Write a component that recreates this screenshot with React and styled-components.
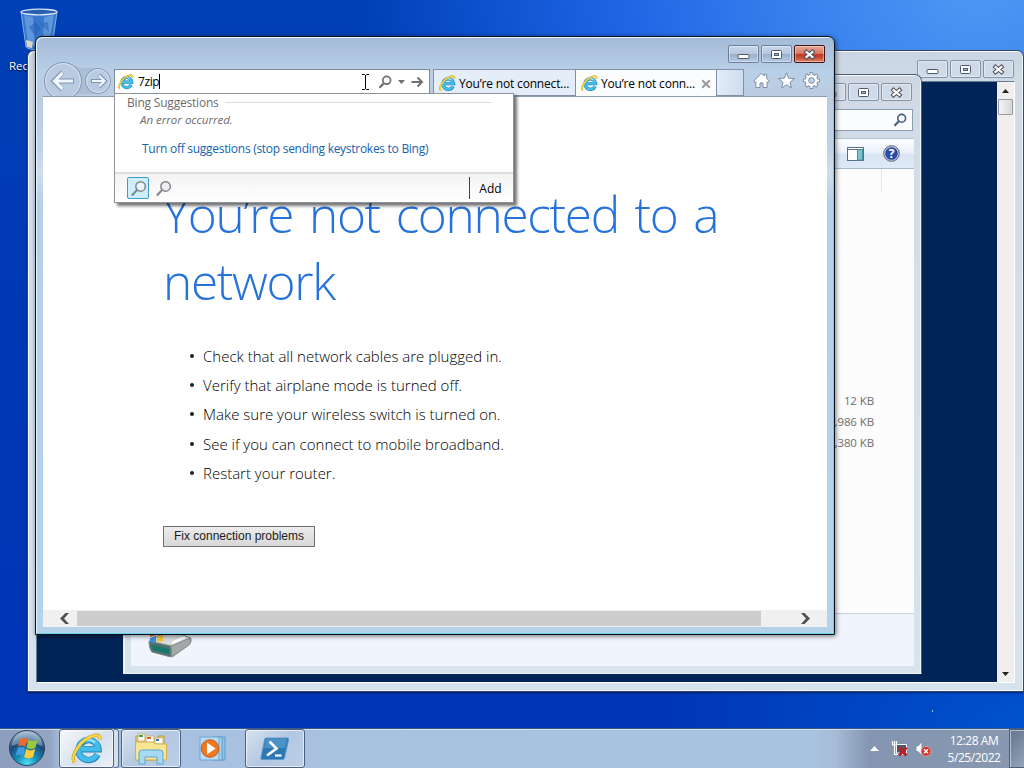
import React from 'react';
import styled, { createGlobalStyle, css } from 'styled-components';

const GlobalStyle = createGlobalStyle`
  * {
    box-sizing: border-box;
  }
  body {
    margin: 0;
    overflow: hidden;
    font-family: 'Open Sans', 'Noto Sans', sans-serif;
    font-size: 12px;
    color: #000;
  }
  svg {
    display: block;
    flex-shrink: 0;
  }
`;

const Screen = styled.div`
  position: relative;
  display: flex;
  flex-direction: column;
  width: 1024px;
  height: 768px;
  overflow: hidden;
`;

const Desktop = styled.div`
  position: relative;
  flex: 1;
  overflow: hidden;
  background: radial-gradient(ellipse 620px 560px at 980px -20px, #4c9af4 0%, #3a82ee 28%, #1d63e4 60%, rgba(0, 72, 208, 0) 100%),
    radial-gradient(ellipse 360px 200px at 1024px 728px, #0052cf 0%, rgba(0, 70, 196, 0) 100%),
    linear-gradient(180deg, #0040b6 0%, #0037b4 50%, #0036b6 100%);
`;

const RecycleBin = styled.div`
  position: absolute;
  top: 7px;
  left: 2px;
  width: 74px;
  display: flex;
  flex-direction: column;
  align-items: center;
  gap: 5px;
  font-size: 11.5px;
  color: #fff;
  white-space: nowrap;
  text-shadow: 0 1px 2px #000;
`;

const Speck = styled.div`
  position: absolute;
  top: 710px;
  left: 932px;
  width: 1px;
  height: 2px;
  background: #9cc0f5;
`;

/* ---------- window chrome ---------- */

const Window = styled.div`
  position: absolute;
  display: flex;
  flex-direction: column;
`;

const ShellWindow = styled(Window)`
  top: 50px;
  left: 27px;
  width: 997px;
  height: 642px;
  padding: 0 8px 8px;
  border: 1px solid #35485f;
  border-radius: 7px 7px 0 0;
  background: linear-gradient(180deg, #c9d5e4 0px, #d0dbe7 40px, #d6e2ed 100%);
  box-shadow: inset 1px 1px 0 #f4f9fd, inset -1px -1px 0 #f0f6fa, 0 1px 2px rgba(0, 0, 30, 0.5);
`;

const ExplorerWindow = styled(Window)`
  top: 74px;
  left: 123px;
  width: 799px;
  height: 600px;
  padding: 0 7px 7px;
  border: 1px solid #4a5c72;
  border-left-color: #e8eff5;
  border-bottom-color: #eef4f8;
  border-radius: 7px 7px 0 0;
  background: linear-gradient(180deg, #cfd7e3 0px, #d2dce7 60px, #d7e4ed 100%);
  box-shadow: inset 1px 1px 0 #f4f8fb, inset -1px 0 0 #e9f1f6;
`;

const BrowserWindow = styled(Window)`
  top: 36px;
  left: 35px;
  width: 800px;
  height: 599px;
  padding: 0 7px 7px;
  border: 1px solid #07111c;
  border-radius: 7px 7px 0 0;
  background: linear-gradient(180deg, #a3bad6 0px, #acc2de 14px, #b9d0e8 34px, #bccce1 60px, #bfd2ea 110px, #cfdeee 135px, #b4d0ea 165px, #b3d3ec 100%);
  box-shadow: inset 1px 1px 0 #e6f5ff, inset -1px -1px 0 #6fd0ea, 1px 1px 5px rgba(0, 0, 0, 0.55);
`;

const TitleBar = styled.div`
  display: flex;
  justify-content: flex-end;
  align-items: flex-start;
  gap: 2px;
  flex-shrink: 0;
  height: ${(props) => props.$height}px;
  padding-top: ${(props) => props.$top}px;
  padding-right: ${(props) => props.$right || 1}px;
`;

const activeButton = css`
  border-color: #6b7f9b;
  background: linear-gradient(180deg, #c8d7ea 0%, #b7c9e0 48%, #9cb0cb 52%, #b5cae2 100%);
`;

const closeButton = css`
  border-color: #3f1310;
  background: linear-gradient(180deg, #e8a596 0%, #d97c69 46%, #bf3a22 52%, #c84f35 75%, #dd8b70 100%);
`;

const CaptionButton = styled.div`
  display: flex;
  align-items: center;
  justify-content: center;
  width: 31px;
  height: 18px;
  border: 1px solid #8393a8;
  border-radius: 2px;
  background: rgba(210, 221, 234, 0.5);
  box-shadow: inset 0 0 0 1px rgba(255, 255, 255, 0.4);
  ${(props) => props.$active && activeButton}
  ${(props) => props.$close && closeButton}
`;

/* ---------- console window ---------- */

const ShellBody = styled.div`
  display: flex;
  flex: 1;
  border: 1px solid #6c7c91;
  border-right-color: #fff;
  border-bottom: 1px solid #fff;
`;

const ShellText = styled.div`
  flex: 1;
  background: #012456;
`;

const VScroll = styled.div`
  display: flex;
  flex-direction: column;
  align-items: center;
  justify-content: space-between;
  width: 17px;
  padding: 7px 0 6px;
  background: #f0efee;
`;

const VScrollTop = styled.div`
  display: flex;
  flex-direction: column;
  align-items: center;
  gap: 6px;
`;

const VThumb = styled.div`
  width: 15px;
  height: 16px;
  border: 1px solid #9a9a9c;
  border-radius: 1px;
  background: linear-gradient(90deg, #f5f5f5, #d6d6da);
`;

/* ---------- explorer window ---------- */

const SearchRow = styled.div`
  display: flex;
  justify-content: flex-end;
  height: 29px;
  padding-right: 1px;
`;

const SearchBox = styled.div`
  display: flex;
  align-items: center;
  justify-content: flex-end;
  width: 200px;
  height: 22px;
  padding-right: 5px;
  border: 1px solid #8f9fb3;
  background: #fafcfe;
`;

const CommandBar = styled.div`
  display: flex;
  align-items: center;
  justify-content: flex-end;
  gap: 19px;
  height: 31px;
  padding-right: 14px;
  border-top: 1px solid #b2c1d2;
  border-bottom: 1px solid #a9bad0;
  background: linear-gradient(180deg, #fbfdff 0%, #eaf1fa 48%, #d9e5f4 52%, #dee9f6 100%);
`;

const FileList = styled.div`
  display: flex;
  flex: 1;
  justify-content: flex-end;
  background: #fcfcfd;
`;

const SizeColumn = styled.div`
  display: flex;
  flex-direction: column;
  align-items: flex-end;
  width: 90px;
  padding: 221px 7px 0 0;
  font-size: 11.5px;
  line-height: 21px;
  letter-spacing: -0.1px;
  color: #6d6d6d;
`;

const ColumnEdge = styled.div`
  width: 33px;
  height: 22px;
  border-left: 1px solid #e2e6ec;
`;

const DetailsPane = styled.div`
  height: 53px;
  padding: 13px 0 0 16px;
  border-top: 1px solid #c6cfdc;
  background: #f0f4fd;
`;

/* ---------- browser window ---------- */

const NavRow = styled.div`
  position: relative;
  display: flex;
  flex-shrink: 0;
  align-items: flex-end;
  height: 27px;
`;

const AddressBar = styled.div`
  display: flex;
  align-items: center;
  width: 316px;
  height: 27px;
  padding: 0 5px 3px 3px;
  border: 1px solid #7a8ba0;
  border-bottom: 0;
  background: #fff;
  font-size: 12px;
`;

const Typed = styled.span`
  margin-left: 4px;
  border-right: 1px solid #000;
  line-height: 15px;
  letter-spacing: -0.4px;
`;

const AddressTools = styled.div`
  display: flex;
  align-items: center;
  gap: 6px;
  margin-left: auto;
`;

const Tabs = styled.div`
  display: flex;
  height: 27px;
  margin-left: 3px;
  border-left: 1px solid #7f90a7;
`;

const Tab = styled.div`
  display: flex;
  align-items: center;
  gap: 3px;
  width: ${(props) => props.$width}px;
  padding: 2px 5px ${(props) => (props.$current ? 1 : 0)}px 5px;
  border: 1px solid #7f90a7;
  border-left: 0;
  border-bottom: ${(props) => (props.$current ? '0' : '1px solid #7f90a7')};
  background: ${(props) => (props.$current ? '#fafcfe' : '#e4edf8')};
  font-size: 12px;
  letter-spacing: -0.18px;
  white-space: nowrap;
`;

const TabClose = styled.span`
  margin-left: auto;
`;

const NewTab = styled.div`
  width: 27px;
  border: 1px solid #7f90a7;
  border-left: 0;
  background: linear-gradient(90deg, #e3edf8, #cddced);
`;

const BrowserTools = styled.div`
  display: flex;
  align-items: center;
  gap: 8px;
  height: 27px;
  margin-left: 9px;
  padding-bottom: 5px;
`;

const Page = styled.div`
  flex: 1;
  padding: 84px 80px 0 120px;
  border-top: 1px solid #8a9bb3;
  background: #fff;
`;

const Heading = styled.h1`
  margin: 0;
  font-size: 49.5px;
  font-weight: 300;
  line-height: 67px;
  letter-spacing: -1.3px;
  word-spacing: 4.2px;
  color: #2672dd;
`;

const Tips = styled.ul`
  margin: 26px 0 0;
  padding: 0 0 0 40px;
  list-style: none;
`;

const Tip = styled.li`
  display: flex;
  align-items: center;
  height: 29.3px;
  font-size: 15px;
  font-weight: 300;
  color: #000;

  &::before {
    content: '';
    width: 4px;
    height: 4px;
    margin: 0 9px 0 -13px;
    border-radius: 50%;
    background: #222;
  }
`;

const FixButton = styled.button`
  display: block;
  width: 152px;
  height: 21px;
  margin: 39px 0 0;
  padding: 0 0 2px;
  border: 1px solid #707070;
  background: linear-gradient(180deg, #ececec, #d8d8d8);
  font-family: 'Liberation Sans', Arial, sans-serif;
  font-size: 12px;
  color: #222;
`;

const HScroll = styled.div`
  display: flex;
  align-items: center;
  flex-shrink: 0;
  height: 17px;
  padding: 0 16px;
  background: #f0f0f0;
`;

const HThumb = styled.div`
  width: 684px;
  height: 15px;
  margin: 0 auto 0 7px;
  background: #cdcdcd;
`;

const Suggestions = styled.div`
  position: absolute;
  z-index: 2;
  top: 24px;
  left: 71px;
  display: flex;
  flex-direction: column;
  width: 400px;
  height: 110px;
  border: 1px solid #8e9299;
  background: #fff;
  box-shadow: 3px 3px 3px rgba(0, 0, 0, 0.55);
`;

const SuggestHeader = styled.div`
  display: flex;
  align-items: center;
  gap: 6px;
  height: 16px;
  padding: 0 21px 0 12px;
  font-size: 12px;
  letter-spacing: -0.2px;
  color: #6d6d6d;

  &::after {
    content: '';
    flex: 1;
    height: 1px;
    background: #dcdcdc;
  }
`;

const SuggestNote = styled.div`
  padding: 2px 0 0 25px;
  font-size: 11.5px;
  font-style: italic;
  line-height: 16px;
  color: #6d6d6d;
`;

const SuggestLink = styled.div`
  padding: 13px 0 0 27px;
  font-size: 12px;
  line-height: 16px;
  letter-spacing: -0.28px;
  color: #1563b0;
`;

const SuggestFooter = styled.div`
  display: flex;
  align-items: center;
  gap: 3px;
  height: 30px;
  margin-top: auto;
  padding: 0 3px 0 12px;
  border-top: 2px solid #dedede;
  background: linear-gradient(180deg, #f3f3f3, #fff);
`;

const Provider = styled.div`
  display: flex;
  align-items: center;
  justify-content: center;
  width: 22px;
  height: 22px;
  border: 1px solid ${(props) => (props.$selected ? '#3f9cc4' : 'transparent')};
  border-radius: 2px;
  background: ${(props) => (props.$selected ? '#cdeefb' : 'none')};
`;

const AddLink = styled.div`
  display: flex;
  align-items: center;
  justify-content: center;
  width: 41px;
  height: 22px;
  margin-left: auto;
  padding-left: 1px;
  border-left: 1px solid #444;
`;

const TextCursor = styled.div`
  position: absolute;
  z-index: 3;
  top: 74px;
  left: 361px;
`;

/* ---------- taskbar ---------- */

const Taskbar = styled.div`
  display: flex;
  align-items: stretch;
  height: 40px;
  border-top: 1px solid #3a5a8a;
  background: linear-gradient(90deg, #8c9dbd 0px, #93a5c3 50px, #a9c1e0 62px, #a9c2e0 815px, #a7bcd6 835px, #8395b0 870px, #8898b0 1024px);
  box-shadow: inset 0 1px 0 rgba(230, 242, 255, 0.65);
`;

const StartButton = styled.div`
  display: flex;
  justify-content: center;
  width: 54px;
  margin-right: 5px;
`;

const TaskButton = styled.div`
  display: flex;
  align-items: center;
  justify-content: center;
  width: ${(props) => props.$width || 60}px;
  height: 39px;
  border: 1px solid ${(props) => (props.$plain ? 'transparent' : '#4b5f7c')};
  border-radius: 3px;
  background: ${(props) => {
    if (props.$plain) return 'none';
    return props.$active
      ? 'linear-gradient(135deg, #f5f8fb, #d6e0ec 55%, #e9eff6)'
      : 'linear-gradient(135deg, #d6e2ef, #b3c7e1 50%, #bccfe6)';
  }};
  box-shadow: ${(props) => (props.$plain ? 'none' : 'inset 0 0 0 1px rgba(255, 255, 255, 0.6)')};
`;

const StackEdge = styled.div`
  width: 5px;
  height: 39px;
  margin-right: 2px;
  border: 1px solid #5b7090;
  border-left: 0;
  border-radius: 0 3px 3px 0;
  background: #d3e0ee;
`;

const Tray = styled.div`
  display: flex;
  align-items: center;
  margin-left: auto;
`;

const TrayIcons = styled.div`
  display: flex;
  align-items: center;
  gap: 7px;

  svg:first-child {
    margin-right: 5px;
  }
`;

const Clock = styled.div`
  display: flex;
  flex-direction: column;
  align-items: center;
  width: 70px;
  margin-left: 7px;
  padding-top: 1px;
  font-size: 12px;
  line-height: 17px;
  letter-spacing: -0.42px;
  color: #fff;
`;

const ShowDesktop = styled.div`
  width: 15px;
  height: 39px;
  border: 1px solid #4d6078;
  border-right: 0;
  background: linear-gradient(135deg, #64758c, #94a4b9);
  box-shadow: inset 1px 1px 0 rgba(220, 232, 245, 0.6);
`;

/* ---------- drawings ---------- */

const MinGlyph = () => (
  <svg width="13" height="13" viewBox="0 0 13 13">
    <rect x="1" y="6.5" width="11" height="4" rx="1" fill="#fff" stroke="#4a5970" />
  </svg>
);

const MaxGlyph = () => (
  <svg width="13" height="13" viewBox="0 0 13 13">
    <rect x="1.5" y="2.5" width="10" height="8" rx="1" fill="#fff" stroke="#4a5970" />
    <rect x="4.5" y="5.5" width="4" height="2" fill="#aebfd4" stroke="#4a5970" />
  </svg>
);

const CloseGlyph = () => (
  <svg width="13" height="13" viewBox="0 0 13 13">
    <path d="M3.5 4l6 5M9.5 4l-6 5" stroke="#4b4f5c" strokeWidth="4.2" strokeLinecap="square" />
    <path d="M3.5 4l6 5M9.5 4l-6 5" stroke="#fff" strokeWidth="2.2" strokeLinecap="square" />
  </svg>
);

const IeLogo = ({ size }) => (
  <svg width={size} height={size} viewBox="0 0 32 32" fill="none">
    <path d="M26.5 21.5a10 10 0 1 1 1-5.2H10" stroke="#1c7fb8" strokeWidth="6.4" />
    <path d="M26.3 21.2a10 10 0 1 1 1-5.2H10" stroke="#45bdea" strokeWidth="4.8" />
    <path d="M9 11a10 10 0 0 1 15-1.5" stroke="#a5e6fb" strokeWidth="2" />
    <path d="M3.6 29.5C-1.5 24 9 6 23 2.6c4-1 6.5.4 6 4" stroke="#c79a1a" strokeWidth="3.4" />
    <path d="M3.6 29.5C-1.5 24 9 6 23 2.6c4-1 6.5.4 6 4" stroke="#f8d84a" strokeWidth="2.3" />
  </svg>
);

const NavArrows = () => (
  <svg width="71" height="34" viewBox="0 0 71 34" fill="none">
    <path d="M30 3c8 4 14 3 25 3v26H28z" fill="#9fb2cb" opacity="0.55" />
    <circle cx="20" cy="19" r="18.5" fill="#b9cbe1" stroke="#7f95b2" />
    <circle cx="20" cy="19" r="17.3" stroke="#d6e3f1" />
    <circle cx="55" cy="19" r="12.5" fill="#b9cbe1" stroke="#7f95b2" />
    <circle cx="55" cy="19" r="11.4" stroke="#d6e3f1" />
    <path d="M31 19H12M19.5 10.5L11 19l8.5 8.5" stroke="#7f94b1" strokeWidth="5" />
    <path d="M30 19H12M19.5 11L11.5 19l8 8" stroke="#eff6fd" strokeWidth="3.2" />
    <path d="M48 19h13M56 13l6 6-6 6" stroke="#7f94b1" strokeWidth="3.8" />
    <path d="M49 19h12M56 13.5l5.5 5.5-5.5 5.5" stroke="#eff6fd" strokeWidth="2.2" />
  </svg>
);

const Magnifier = ({ size = 14, color = '#6f6f6f', fill = 'none', width = 1.7 }) => (
  <svg width={size} height={size} viewBox="0 0 14 14" fill="none">
    <path d="M5.8 8.2L1.5 12.7" stroke={color} strokeWidth={width + 0.5} />
    <circle cx="8.7" cy="5.3" r="3.9" fill={fill} stroke={color} strokeWidth={width} />
  </svg>
);

const DownTriangle = () => (
  <svg width="7" height="4" viewBox="0 0 7 4">
    <path d="M0 0h7L3.5 4z" fill="#6f6f6f" />
  </svg>
);

const GoArrow = () => (
  <svg width="13" height="12" viewBox="0 0 13 12" fill="none" stroke="#6f6f6f" strokeWidth="2">
    <path d="M0.5 6H11M6.5 1.5L11 6l-4.5 4.5" />
  </svg>
);

const TabCross = () => (
  <svg width="10" height="10" viewBox="0 0 10 10" fill="none" stroke="#9a9a9a" strokeWidth="2">
    <path d="M1.2 1.2l7.6 7.6M8.8 1.2L1.2 8.8" />
  </svg>
);

const HomeIcon = () => (
  <svg width="17" height="17" viewBox="0 0 17 17" fill="#fff" stroke="#73849c" strokeWidth="0.9">
    <path d="M8.5 1.2L11.3 4V2.3h2.4v4.1l2.6 2.7-1.4 1.3-.8-.8v5.9H10V11H7v4.5H2.9V9.6l-.8.8L.7 9.1z" />
  </svg>
);

const StarIcon = () => (
  <svg width="17" height="17" viewBox="0 0 17 17" fill="#fff" stroke="#73849c" strokeWidth="0.9">
    <path d="M8.5.8l2.2 5.4 5.7.4-4.4 3.7 1.4 5.6-4.9-3.1-4.9 3.1L5 10.3.6 6.6l5.7-.4z" />
  </svg>
);

// eight teeth around a ring, outlined by a slightly larger copy underneath
const teeth = [0, 45, 90, 135, 180, 225, 270, 315];

const GearIcon = () => (
  <svg width="17" height="17" viewBox="0 0 17 17" fill="none">
    {teeth.map((angle) => (
      <path key={angle} d="M8.5 0.2v4" stroke="#73849c" strokeWidth="3.6" transform={`rotate(${angle} 8.5 8.5)`} />
    ))}
    <circle cx="8.5" cy="8.5" r="4.5" stroke="#73849c" strokeWidth="4" />
    {teeth.map((angle) => (
      <path key={angle} d="M8.5 1v4" stroke="#fff" strokeWidth="2.1" transform={`rotate(${angle} 8.5 8.5)`} />
    ))}
    <circle cx="8.5" cy="8.5" r="4.5" stroke="#fff" strokeWidth="2.6" />
  </svg>
);

const ScrollChevron = ({ right }) => (
  <svg width="11" height="13" viewBox="0 0 11 13">
    <path d={right ? 'M1 1h3.5L10 6.5 4.5 12H1l5-5.5z' : 'M10 1H6.5L1 6.5 6.5 12H10L5 6.5z'} fill="#505050" />
  </svg>
);

const ScrollTriangle = ({ down }) => (
  <svg width="7" height="4" viewBox="0 0 7 4">
    <path d={down ? 'M0 0h7L3.5 4z' : 'M0 4h7L3.5 0z'} fill="#222" />
  </svg>
);

const PreviewIcon = () => (
  <svg width="17" height="14" viewBox="0 0 17 14">
    <rect x="0.5" y="0.5" width="16" height="13" fill="#fff" stroke="#5c6f88" />
    <path d="M1 2.5h10" stroke="#5c6f88" />
    <rect x="10.5" y="2.5" width="5" height="10.5" fill="#7cc3cf" stroke="#4b8fa0" />
  </svg>
);

const HelpIcon = () => (
  <svg width="17" height="17" viewBox="0 0 17 17">
    <circle cx="8.5" cy="8.5" r="7.8" fill="#c3cbd8" stroke="#55607a" />
    <circle cx="8.5" cy="8.5" r="6.3" fill="#2b4ba5" />
    <text x="8.5" y="12.8" textAnchor="middle" fontSize="12" fontWeight="700" fill="#fff">?</text>
  </svg>
);

const DriveIcon = () => (
  <svg width="46" height="32" viewBox="0 0 46 32">
    <path d="M3 12L24 4l20 7v4L26 29 6 25z" fill="#d9dadb" stroke="#8a8c8d" />
    <path d="M2 14l22 5v11L5 25c-2-2-3-7-3-11z" fill="#4d716e" stroke="#7b8584" />
    <path d="M5 18l17 4v5L6 23z" fill="#17766d" />
    <path d="M24 19l19-8c1 3 1 5-1 7L25 30z" fill="#a5a8a8" stroke="#85878a" />
    <path d="M25 16l13-6" stroke="#fff" strokeWidth="2.5" />
    <path d="M3 1l6-1v8l-6 2z" fill="#e8692d" />
    <path d="M10 0h6v7l-6 1z" fill="#86bd37" />
    <path d="M3 11l6-2v7l-6-1z" fill="#3b8fd6" />
    <path d="M10 9l6-1v6l-6 2z" fill="#f3c53c" />
  </svg>
);

const BinIcon = () => (
  <svg width="38" height="46" viewBox="0 0 38 46">
    <path d="M1 5l5 35c3 4 23 4 26 0l5-35z" fill="#3d7ed0" stroke="#8db9ea" opacity="0.9" />
    <path d="M4 8l4 28 7 3-2-29zM24 10l-1 28 6-2 5-28z" fill="#7fb2e8" opacity="0.55" />
    <path d="M9 20l7-5 5 7-6 7zM20 17l8-2 1 10z" fill="#245fb4" opacity="0.5" />
    <path d="M6 33l7 2-1 6-5-1z" fill="#ddd6c4" />
    <ellipse cx="19" cy="5" rx="18" ry="2.8" fill="#2a5fae" stroke="#d3e4f5" strokeWidth="1.3" />
  </svg>
);

const StartOrb = () => (
  <svg width="38" height="38" viewBox="0 0 38 38">
    <defs>
      <radialGradient id="orb" cx="50%" cy="95%" r="90%">
        <stop offset="0" stopColor="#4fe0f5" />
        <stop offset="0.35" stopColor="#168cb8" />
        <stop offset="0.7" stopColor="#1c4a78" />
        <stop offset="1" stopColor="#8ba7c2" />
      </radialGradient>
    </defs>
    <circle cx="19" cy="19" r="17.5" fill="url(#orb)" stroke="#29405f" />
    <path d="M4 17a15 15 0 0 1 30 0c-8-4-22-4-30 0z" fill="#d6e6f2" opacity="0.35" />
    <path d="M12 10c2.5-1.5 5-1.5 7.5 0l-2 8c-2.5-2-5-2-7.5-.5z" fill="#ec6a2c" />
    <path d="M20.5 10.8c2.5 1.7 6 1.7 9-.3l-2 8c-3 2-6 2-9 0z" fill="#9ac93c" />
    <path d="M9.7 19c2.5-1.5 5-1.5 7.5.3l-2 8c-2.5-2-5-2-7.5-.5z" fill="#3f9be0" />
    <path d="M18.2 20c2.7 1.7 6 1.7 9-.3l-2 8c-3 2-6 2-9 0z" fill="#fbcb3c" />
  </svg>
);

const FolderIcon = () => (
  <svg width="34" height="32" viewBox="0 0 34 32">
    <path d="M2 3h6l2 3h14V3h6v24H2z" fill="#e6cd79" stroke="#b79a45" />
    <path d="M4 1h7v7H4z" fill="#fff" stroke="#c8b56b" />
    <path d="M5 2h4v2H5z" fill="#3aa64a" />
    <path d="M12 3h8v7h-8z" fill="#fff" stroke="#c8b56b" />
    <path d="M13 4h4v2h-4z" fill="#e05a2f" />
    <path d="M21 5h8v6h-8z" fill="#fff" stroke="#c8b56b" />
    <path d="M22 6h3v2h-3z" fill="#3b78c8" />
    <path d="M1.5 9h18l2 2h11v16h-31z" fill="#f7e594" stroke="#cfb35c" />
    <path d="M5 31V20q0-3 3-3h18q3 0 3 3v11h-6v-7H11v7z" fill="#a6daf2" stroke="#5da6cd" />
  </svg>
);

const MediaIcon = () => (
  <svg width="28" height="26" viewBox="0 0 28 26">
    <path d="M18 1h8v23h-8z" fill="#8fc0e4" stroke="#5d9bcd" />
    <path d="M14 1h9v23h-9z" fill="#a9d2ef" stroke="#5d9bcd" />
    <path d="M1 1h19v23H1z" fill="#b9dcf4" stroke="#6aa6d3" />
    <circle cx="11" cy="12.5" r="8.8" fill="#ec7a24" stroke="#c55d15" />
    <path d="M8 6.5l8.5 6-8.5 6z" fill="#fff" />
  </svg>
);

const ShellIcon = () => (
  <svg width="30" height="24" viewBox="0 0 30 24" fill="none">
    <path d="M6 1h21.5q1.5 0 1.1 1.5L24.5 21q-.4 1.5-2 1.5H2q-1.5 0-1.1-1.5L4.6 2.5Q5 1 6 1z" fill="#2c78b4" stroke="#5f9bc8" />
    <path d="M6 2h21l-2 9H4z" fill="#5fa3d4" opacity="0.6" />
    <path d="M9.5 4.5l7 7-9.5 7" stroke="#fff" strokeWidth="2.6" />
    <path d="M15 18.5h6.5" stroke="#fff" strokeWidth="2.2" />
  </svg>
);

const TrayArrow = () => (
  <svg width="9" height="5" viewBox="0 0 9 5">
    <path d="M0 5L4.5 0 9 5z" fill="#fff" />
  </svg>
);

const NetworkIcon = () => (
  <svg width="17" height="16" viewBox="0 0 17 16" fill="none">
    <rect x="5.5" y="3.5" width="10" height="8.5" fill="#4d596a" stroke="#fff" />
    <path d="M1.5 0v4h4V0M3.5 0v13.5H12" stroke="#fff" strokeWidth="1.2" />
    <path d="M8 6.5l7.5 8M15.5 6.5l-7.5 8" stroke="#b81f2c" strokeWidth="3" />
  </svg>
);

const SpeakerIcon = () => (
  <svg width="17" height="16" viewBox="0 0 17 16" fill="none">
    <path d="M1 5h2l4-4.5v14L3 10.5H1z" fill="#f3f6fa" stroke="#687890" strokeWidth="0.6" />
    <circle cx="11" cy="10.3" r="4.9" fill="#d0342c" stroke="#f2b0a8" strokeWidth="0.7" />
    <path d="M9 8.3l4 4M13 8.3l-4 4" stroke="#fff" strokeWidth="1.5" />
  </svg>
);

const IBeam = () => (
  <svg width="9" height="16" viewBox="0 0 9 16" fill="none" stroke="#000">
    <path d="M1 0.5h2.5l1 1 1-1H8M4.5 1v14M1 15.5h2.5l1-1 1 1H8" />
  </svg>
);

const CaptionButtons = ({ active }) => (
  <React.Fragment>
    <CaptionButton $active={active}>
      <MinGlyph />
    </CaptionButton>
    <CaptionButton $active={active}>
      <MaxGlyph />
    </CaptionButton>
    <CaptionButton $close={active}>
      <CloseGlyph />
    </CaptionButton>
  </React.Fragment>
);

const tips = [
  'Check that all network cables are plugged in.',
  'Verify that airplane mode is turned off.',
  'Make sure your wireless switch is turned on.',
  'See if you can connect to mobile broadband.',
  'Restart your router.',
];

const Shell = () => (
  <ShellWindow>
    <TitleBar $height={30} $top={9}>
      <CaptionButtons />
    </TitleBar>
    <ShellBody>
      <ShellText />
      <VScroll>
        <VScrollTop>
          <ScrollTriangle />
          <VThumb />
        </VScrollTop>
        <ScrollTriangle down />
      </VScroll>
    </ShellBody>
  </ShellWindow>
);

const Explorer = () => (
  <ExplorerWindow>
    <TitleBar $height={34} $top={8} $right={2}>
      <CaptionButtons />
    </TitleBar>
    <SearchRow>
      <SearchBox>
        <Magnifier color="#44607f" width={1.6} />
      </SearchBox>
    </SearchRow>
    <CommandBar>
      <PreviewIcon />
      <HelpIcon />
    </CommandBar>
    <FileList>
      <SizeColumn>
        <span>12 KB</span>
        <span>1,986 KB</span>
        <span>1,380 KB</span>
      </SizeColumn>
      <ColumnEdge />
    </FileList>
    <DetailsPane>
      <DriveIcon />
    </DetailsPane>
  </ExplorerWindow>
);

const Browser = () => (
  <BrowserWindow>
    <TitleBar $height={32} $top={8} $right={2}>
      <CaptionButtons active />
    </TitleBar>
    <NavRow>
      <NavArrows />
      <AddressBar>
        <IeLogo size={16} />
        <Typed>7zip</Typed>
        <AddressTools>
          <Magnifier />
          <DownTriangle />
          <GoArrow />
        </AddressTools>
      </AddressBar>
      <Tabs>
        <Tab $width={142}>
          <IeLogo size={17} />
          You’re not connect...
        </Tab>
        <Tab $width={141} $current>
          <IeLogo size={17} />
          You’re not conn...
          <TabClose>
            <TabCross />
          </TabClose>
        </Tab>
        <NewTab />
      </Tabs>
      <BrowserTools>
        <HomeIcon />
        <StarIcon />
        <GearIcon />
      </BrowserTools>
      <Suggestions>
        <SuggestHeader>Bing Suggestions</SuggestHeader>
        <SuggestNote>An error occurred.</SuggestNote>
        <SuggestLink>Turn off suggestions (stop sending keystrokes to Bing)</SuggestLink>
        <SuggestFooter>
          <Provider $selected>
            <Magnifier size={17} color="#7b8790" fill="#eef4f8" width={1.2} />
          </Provider>
          <Provider>
            <Magnifier size={17} color="#858585" fill="#ececf2" width={1.2} />
          </Provider>
          <AddLink>Add</AddLink>
        </SuggestFooter>
      </Suggestions>
    </NavRow>
    <Page>
      <Heading>You’re not connected to a network</Heading>
      <Tips>
        {tips.map((tip) => (
          <Tip key={tip}>{tip}</Tip>
        ))}
      </Tips>
      <FixButton>Fix connection problems</FixButton>
    </Page>
    <HScroll>
      <ScrollChevron />
      <HThumb />
      <ScrollChevron right />
    </HScroll>
  </BrowserWindow>
);

const App = () => (
  <Screen>
    <GlobalStyle />
    <Desktop>
      <RecycleBin>
        <BinIcon />
        Recycle Bin
      </RecycleBin>
      <Speck />
      <Shell />
      <Explorer />
      <Browser />
      <TextCursor>
        <IBeam />
      </TextCursor>
    </Desktop>
    <Taskbar>
      <StartButton>
        <StartOrb />
      </StartButton>
      <TaskButton $active $width={55}>
        <IeLogo size={32} />
      </TaskButton>
      <StackEdge />
      <TaskButton>
        <FolderIcon />
      </TaskButton>
      <TaskButton $plain $width={64}>
        <MediaIcon />
      </TaskButton>
      <TaskButton>
        <ShellIcon />
      </TaskButton>
      <Tray>
        <TrayIcons>
          <TrayArrow />
          <NetworkIcon />
          <SpeakerIcon />
        </TrayIcons>
        <Clock>
          <span>12:28 AM</span>
          <span>5/25/2022</span>
        </Clock>
        <ShowDesktop />
      </Tray>
    </Taskbar>
  </Screen>
);

export default App;
